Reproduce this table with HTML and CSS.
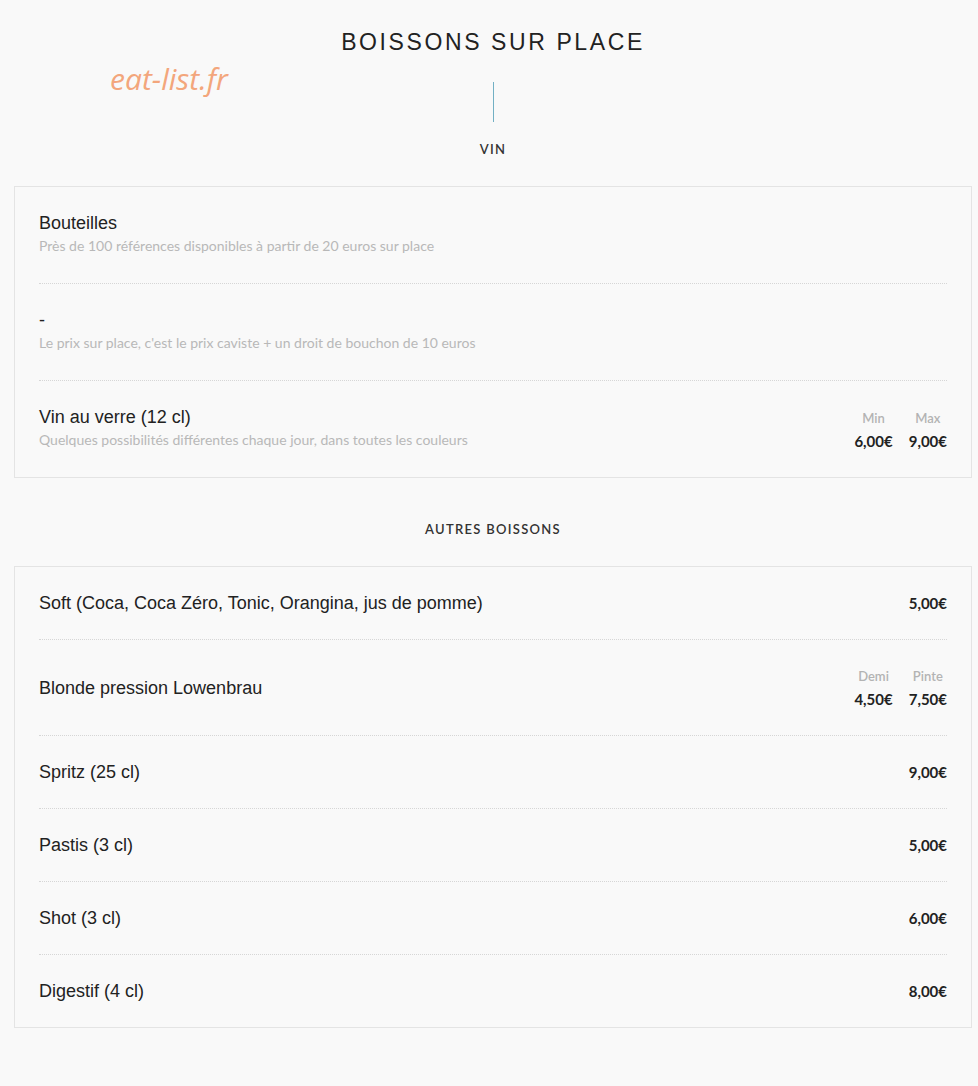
FILE: index.html
```html
<!DOCTYPE html>
<html lang="fr">
<head>
    <meta charset="UTF-8">
    <meta name="viewport" content="width=device-width, initial-scale=1.0">
    <title>Boissons sur place</title>
    <link rel="stylesheet" href="styles.css">
</head>
<body>
    <div class="page">
        <span class="watermark">eat-list.fr</span>
        <h1 class="page-title">BOISSONS SUR PLACE</h1>
        <div class="title-line"></div>

        <h2 class="section-title">VIN</h2>
        <div class="menu-card">
            <div class="menu-item">
                <div class="item-text">
                    <div class="item-name">Bouteilles</div>
                    <div class="item-desc">Près de 100 références disponibles à partir de 20 euros sur place</div>
                </div>
            </div>
            <div class="menu-item">
                <div class="item-text">
                    <div class="item-name">-</div>
                    <div class="item-desc">Le prix sur place, c'est le prix caviste + un droit de bouchon de 10 euros</div>
                </div>
            </div>
            <div class="menu-item">
                <div class="item-text">
                    <div class="item-name">Vin au verre (12 cl)</div>
                    <div class="item-desc">Quelques possibilités différentes chaque jour, dans toutes les couleurs</div>
                </div>
                <div class="prices">
                    <div class="price-col">
                        <span class="price-label">Min</span>
                        <span class="price">6,00€</span>
                    </div>
                    <div class="price-col">
                        <span class="price-label">Max</span>
                        <span class="price">9,00€</span>
                    </div>
                </div>
            </div>
        </div>

        <h2 class="section-title">AUTRES BOISSONS</h2>
        <div class="menu-card">
            <div class="menu-item">
                <div class="item-name">Soft (Coca, Coca Zéro, Tonic, Orangina, jus de pomme)</div>
                <span class="price">5,00€</span>
            </div>
            <div class="menu-item">
                <div class="item-name">Blonde pression Lowenbrau</div>
                <div class="prices">
                    <div class="price-col">
                        <span class="price-label">Demi</span>
                        <span class="price">4,50€</span>
                    </div>
                    <div class="price-col">
                        <span class="price-label">Pinte</span>
                        <span class="price">7,50€</span>
                    </div>
                </div>
            </div>
            <div class="menu-item">
                <div class="item-name">Spritz (25 cl)</div>
                <span class="price">9,00€</span>
            </div>
            <div class="menu-item">
                <div class="item-name">Pastis (3 cl)</div>
                <span class="price">5,00€</span>
            </div>
            <div class="menu-item">
                <div class="item-name">Shot (3 cl)</div>
                <span class="price">6,00€</span>
            </div>
            <div class="menu-item">
                <div class="item-name">Digestif (4 cl)</div>
                <span class="price">8,00€</span>
            </div>
        </div>
    </div>
</body>
</html>
```

FILE: styles.css
```css
* {
    margin: 0;
    padding: 0;
    box-sizing: border-box;
}

body {
    background-color: #f9f9f9;
    font-family: 'Liberation Sans', Arial, sans-serif;
    color: #222;
}

.page {
    position: relative;
    padding: 29px 6px 58px 14px;
}

.watermark {
    position: absolute;
    top: 58px;
    left: 110px;
    font-family: 'Open Sans', sans-serif;
    font-style: italic;
    font-size: 30px;
    color: #f3a67c;
}

.page-title {
    text-align: center;
    font-size: 23px;
    font-weight: normal;
    letter-spacing: 2.6px;
    line-height: 26px;
    color: #222;
}

.title-line {
    width: 1px;
    height: 40px;
    margin: 27px auto 0;
    background-color: #72b0c4;
}

.section-title {
    text-align: center;
    font-family: 'Lato', sans-serif;
    font-size: 13px;
    font-weight: 600;
    letter-spacing: 1.3px;
    line-height: 16px;
    color: #333;
    margin: 19px 0 29px;
}

.menu-card + .section-title {
    margin-top: 43px;
}

.menu-card {
    background-color: #f9f9f9;
    border: 1px solid #e4e4e4;
    padding: 0 24px;
}

.menu-item {
    display: flex;
    align-items: center;
    justify-content: space-between;
    padding: 25px 0;
    border-bottom: 1px dotted #d6d6d6;
}

.menu-item:last-child {
    border-bottom: none;
}

.item-name {
    font-size: 18px;
    line-height: 22px;
    color: #222;
}

.item-desc {
    font-family: 'Lato', sans-serif;
    font-size: 14px;
    line-height: 20px;
    margin: 2px 0;
    color: #b8b8b8;
}

.prices {
    display: flex;
    gap: 16px;
}

.price-col {
    display: flex;
    flex-direction: column;
    align-items: center;
}

.price-label {
    font-family: 'Lato', sans-serif;
    font-size: 13px;
    font-weight: 600;
    line-height: 22px;
    margin-bottom: 1px;
    color: #b3b3b3;
}

.price {
    font-family: 'Lato', sans-serif;
    font-size: 15px;
    font-weight: bold;
    line-height: 22px;
    color: #222;
}
```
